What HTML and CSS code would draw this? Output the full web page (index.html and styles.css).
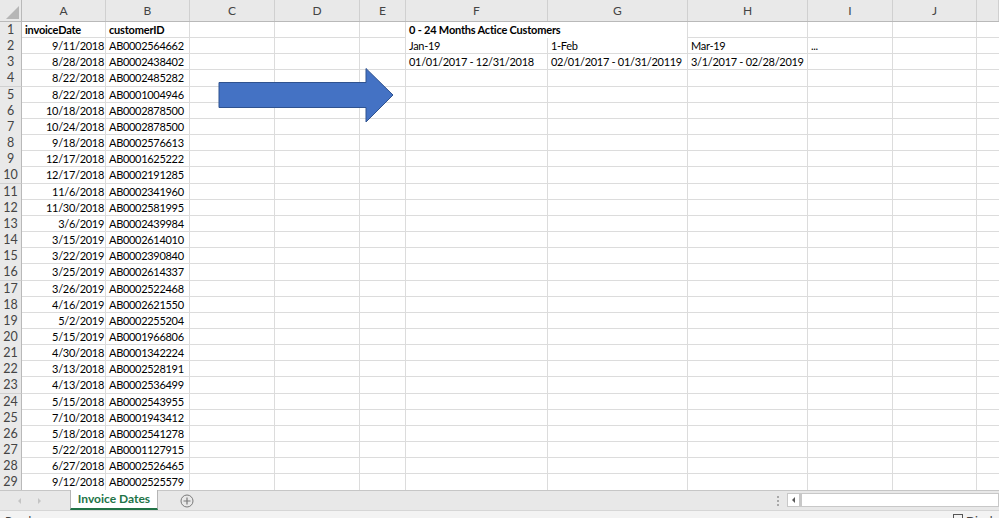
FILE: index.html
```html
<!DOCTYPE html>
<html>
<head>
<meta charset="utf-8">
<link rel="stylesheet" href="styles.css">
</head>
<body>
<div class="app">
  <div class="sheet">
    <div class="colhead">
      <div class="corner"><span class="tri"></span></div>
      <div class="ch">A</div><div class="ch">B</div><div class="ch">C</div><div class="ch">D</div><div class="ch">E</div><div class="ch">F</div><div class="ch">G</div><div class="ch">H</div><div class="ch">I</div><div class="ch">J</div><div class="ch"></div>
    </div>
    <div class="rows">
      <div class="r"><div class="rh">1</div><div class="c b">invoiceDate</div><div class="c b">customerID</div><div class="c"></div><div class="c"></div><div class="c"></div><div class="c b span2">0 - 24 Months Actice Customers</div></div>
      <div class="r"><div class="rh">2</div><div class="c n">9/11/2018</div><div class="c">AB0002564662</div><div class="c"></div><div class="c"></div><div class="c"></div><div class="c">Jan-19</div><div class="c">1-Feb</div><div class="c">Mar-19</div><div class="c">...</div></div>
      <div class="r"><div class="rh">3</div><div class="c n">8/28/2018</div><div class="c">AB0002438402</div><div class="c"></div><div class="c"></div><div class="c"></div><div class="c">01/01/2017 - 12/31/2018</div><div class="c">02/01/2017 - 01/31/20119</div><div class="c">3/1/2017 - 02/28/2019</div></div>
      <div class="r"><div class="rh">4</div><div class="c n">8/22/2018</div><div class="c">AB0002485282</div></div>
      <div class="r"><div class="rh">5</div><div class="c n">8/22/2018</div><div class="c">AB0001004946</div></div>
      <div class="r"><div class="rh">6</div><div class="c n">10/18/2018</div><div class="c">AB0002878500</div></div>
      <div class="r"><div class="rh">7</div><div class="c n">10/24/2018</div><div class="c">AB0002878500</div></div>
      <div class="r"><div class="rh">8</div><div class="c n">9/18/2018</div><div class="c">AB0002576613</div></div>
      <div class="r"><div class="rh">9</div><div class="c n">12/17/2018</div><div class="c">AB0001625222</div></div>
      <div class="r"><div class="rh">10</div><div class="c n">12/17/2018</div><div class="c">AB0002191285</div></div>
      <div class="r"><div class="rh">11</div><div class="c n">11/6/2018</div><div class="c">AB0002341960</div></div>
      <div class="r"><div class="rh">12</div><div class="c n">11/30/2018</div><div class="c">AB0002581995</div></div>
      <div class="r"><div class="rh">13</div><div class="c n">3/6/2019</div><div class="c">AB0002439984</div></div>
      <div class="r"><div class="rh">14</div><div class="c n">3/15/2019</div><div class="c">AB0002614010</div></div>
      <div class="r"><div class="rh">15</div><div class="c n">3/22/2019</div><div class="c">AB0002390840</div></div>
      <div class="r"><div class="rh">16</div><div class="c n">3/25/2019</div><div class="c">AB0002614337</div></div>
      <div class="r"><div class="rh">17</div><div class="c n">3/26/2019</div><div class="c">AB0002522468</div></div>
      <div class="r"><div class="rh">18</div><div class="c n">4/16/2019</div><div class="c">AB0002621550</div></div>
      <div class="r"><div class="rh">19</div><div class="c n">5/2/2019</div><div class="c">AB0002255204</div></div>
      <div class="r"><div class="rh">20</div><div class="c n">5/15/2019</div><div class="c">AB0001966806</div></div>
      <div class="r"><div class="rh">21</div><div class="c n">4/30/2018</div><div class="c">AB0001342224</div></div>
      <div class="r"><div class="rh">22</div><div class="c n">3/13/2018</div><div class="c">AB0002528191</div></div>
      <div class="r"><div class="rh">23</div><div class="c n">4/13/2018</div><div class="c">AB0002536499</div></div>
      <div class="r"><div class="rh">24</div><div class="c n">5/15/2018</div><div class="c">AB0002543955</div></div>
      <div class="r"><div class="rh">25</div><div class="c n">7/10/2018</div><div class="c">AB0001943412</div></div>
      <div class="r"><div class="rh">26</div><div class="c n">5/18/2018</div><div class="c">AB0002541278</div></div>
      <div class="r"><div class="rh">27</div><div class="c n">5/22/2018</div><div class="c">AB0001127915</div></div>
      <div class="r"><div class="rh">28</div><div class="c n">6/27/2018</div><div class="c">AB0002526465</div></div>
      <div class="r"><div class="rh">29</div><div class="c n">9/12/2018</div><div class="c">AB0002525579</div></div>
    </div>
    <svg class="arrow" width="178" height="58" viewBox="0 0 178 58">
      <polygon points="1,15.5 148,15.5 148,1.5 175,28 148,55 148,40.5 1,40.5" fill="#4472C4" stroke="#2F528F" stroke-width="1"/>
    </svg>
  </div>
  <div class="tabbar">
    <div class="nav"><span class="tl"></span><span class="tr"></span></div>
    <div class="tab">Invoice Dates</div>
    <div class="add"><svg width="14" height="14" viewBox="0 0 14 14"><circle cx="7" cy="7" r="6" fill="none" stroke="#7a7a7a" stroke-width="1"/><path d="M7 3.5v7M3.5 7h7" stroke="#7a7a7a" stroke-width="1.2"/></svg></div>
    <div class="spacer"></div>
    <div class="dots"><span></span><span></span><span></span></div>
    <div class="hscroll"><div class="hbtn"><span class="sl"></span></div><div class="htrack"></div></div>
  </div>
  <div class="status">
    <span class="ready">Ready</span>
    <span class="disp"><span class="chk"></span>Display Settings</span>
  </div>
</div>
</body>
</html>
```
FILE: styles.css
```css
* { box-sizing: border-box; }
html, body { margin: 0; padding: 0; }
body {
  width: 999px;
  height: 518px;
  overflow: hidden;
  background: #fff;
  font-family: "Lato", "Liberation Sans", sans-serif;
  font-size: 11px;
  letter-spacing: -0.3px;
  color: #000;
}
.app { display: flex; flex-direction: column; height: 518px; overflow: hidden; }
.sheet {
  position: relative;
  height: 490px;
  overflow: hidden;
  flex: none;
}
.colhead, .r {
  display: grid;
  grid-template-columns: 22px 84px 84px 85px 85px 46px 142px 140px 120px 85px 84px 1fr;
}
.colhead {
  height: 22px;
  background: #e9e9e9;
  border-bottom: 1px solid #b9b9b9;
}
.corner {
  position: relative;
  border-right: 1px solid #b9b9b9;
}
.tri {
  position: absolute;
  right: 2px;
  bottom: 2px;
  width: 0; height: 0;
  border-left: 13px solid transparent;
  border-bottom: 13px solid #b6b6b6;
}
.ch {
  border-right: 1px solid #d0d0d0;
  text-align: center;
  line-height: 21px;
  font-size: 12px;
  letter-spacing: 0;
  color: #444;
}
.rows {
  background-color: #fff;
  background-image:
    linear-gradient(#dcdcdc, #dcdcdc), linear-gradient(#dcdcdc, #dcdcdc),
    linear-gradient(#dcdcdc, #dcdcdc), linear-gradient(#dcdcdc, #dcdcdc),
    linear-gradient(#dcdcdc, #dcdcdc), linear-gradient(#dcdcdc, #dcdcdc),
    linear-gradient(#dcdcdc, #dcdcdc), linear-gradient(#dcdcdc, #dcdcdc),
    linear-gradient(#dcdcdc, #dcdcdc), linear-gradient(#dcdcdc, #dcdcdc);
  background-size: 1px 100%;
  background-repeat: no-repeat;
  background-position: 105px 0, 189px 0, 274px 0, 359px 0, 405px 0, 547px 0, 687px 0, 807px 0, 892px 0, 976px 0;
}
.r {
  height: 16.16px;
  border-bottom: 1px solid #dcdcdc;
}
.rh {
  background: #e9e9e9;
  border-right: 1px solid #b9b9b9;
  border-bottom: 1px solid #d0d0d0;
  margin-bottom: -1px;
  text-align: center;
  font-size: 12.5px;
  letter-spacing: 0;
  line-height: 16px;
  color: #444;
}
.c {
  padding: 0 2px 0 3px;
  line-height: 15px;
  white-space: nowrap;
  overflow: hidden;
}
.c.n { text-align: right; }
.c.b { font-weight: 700; letter-spacing: -0.2px; }
.c.span2 { grid-column: span 2; background: #fff; margin-right: 1px; }
.arrow {
  position: absolute;
  left: 218px;
  top: 67px;
}
.tabbar {
  height: 20px;
  flex: none;
  display: flex;
  align-items: stretch;
  background: #e8e8e8;
  border-top: 1px solid #c6c6c6;
  letter-spacing: 0;
}
.nav { width: 70px; display: flex; align-items: center; }
.tl, .tr { display: inline-block; width: 0; height: 0; border-top: 3px solid transparent; border-bottom: 3px solid transparent; }
.tl { margin-left: 18px; border-right: 3px solid #c4c4c4; }
.tr { margin-left: 17px; border-left: 3px solid #c4c4c4; }
.tab {
  width: 88px;
  margin-top: -1px;
  background: #fff;
  border-left: 1px solid #b5b5b5;
  border-right: 1px solid #b5b5b5;
  border-bottom: 2px solid #217346;
  color: #217346;
  font-weight: 700;
  font-size: 12px;
  text-align: center;
  line-height: 18px;
}
.add { width: 56px; display: flex; align-items: center; justify-content: center; padding-left: 2px; }
.add svg { display: block; }
.spacer { flex: 1; }
.dots { width: 14px; display: flex; flex-direction: column; align-items: center; justify-content: center; gap: 2px; margin-right: 2px; }
.dots span { width: 2px; height: 2px; background: #a8a8a8; }
.hscroll { width: 212px; display: flex; padding: 2px 0 3px; }
.hbtn { width: 13px; background: #fff; border: 1px solid #c8c8c8; display: flex; align-items: center; justify-content: center; }
.sl { width: 0; height: 0; border-top: 3px solid transparent; border-bottom: 3px solid transparent; border-right: 3px solid #5a5a5a; }
.htrack { flex: 1; background: #fff; border: 1px solid #c8c8c8; border-left: 2px solid #c8c8c8; }
.status {
  height: 22px;
  flex: none;
  background: #f3f3f3;
  border-top: 1px solid #d6d6d6;
  display: flex;
  overflow: hidden;
  padding: 2px 0 0 5px;
  font-size: 12px;
  letter-spacing: 0;
  color: #444;
}
.ready { flex: 1; }
.disp { display: flex; align-items: flex-start; flex: none; width: 46px; overflow: hidden; white-space: nowrap; }
.chk { width: 10px; height: 10px; flex: none; border: 1px solid #555; margin: 1px 3px 0 0; }
```
